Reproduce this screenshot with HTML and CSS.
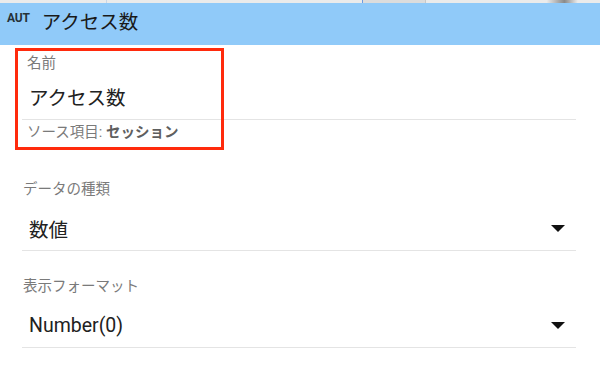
FILE: index.html
```html
<!DOCTYPE html>
<html lang="ja">
  <head>
    <meta charset="UTF-8" />
    <meta name="viewport" content="width=device-width, initial-scale=1.0" />
    <title>アクセス数</title>
    <link rel="stylesheet" href="styles.css">
  </head>
  <body>
    <div class="top-strip">
      <span class="strip-seg seg-a"></span>
      <span class="strip-seg seg-b"></span>
      <span class="strip-seg seg-c"></span>
      <span class="strip-seg seg-d"></span>
    </div>

    <header class="appbar">
      <span class="appbar-badge">AUT</span>
      <h1 class="appbar-title">アクセス数</h1>
    </header>

    <main class="form">
      <div class="field field-name">
        <div class="field-label">名前</div>
        <div class="field-row">
          <span class="field-value">アクセス数</span>
        </div>
        <div class="field-help">ソース項目: <strong>セッション</strong></div>
        <div class="highlight"></div>
      </div>

      <div class="field field-select field-first">
        <div class="field-label">データの種類</div>
        <div class="field-row">
          <span class="field-value">数値</span>
          <span class="caret"></span>
        </div>
      </div>

      <div class="field field-select">
        <div class="field-label">表示フォーマット</div>
        <div class="field-row">
          <span class="field-value">Number(0)</span>
          <span class="caret"></span>
        </div>
      </div>

      <div class="field field-select">
        <div class="field-label">集計方法</div>
      </div>
    </main>
  </body>
</html>
```

FILE: styles.css
```css
body {
  margin: 0;
  font-family: Roboto, "Noto Sans CJK JP", sans-serif;
  background-color: #ffffff;
  color: #212121;
  overflow: hidden;
}

/* Browser strip above the app bar */
.top-strip {
  display: flex;
  height: 3px;
  background-color: #ebebeb;
}

.strip-seg {
  display: block;
  height: 3px;
}

.seg-a {
  width: 120px;
  border-right: 1px solid #c9d6e6;
}

.seg-b {
  width: 287px;
  border-right: 1px solid #6d9be0;
}

.seg-c {
  width: 70px;
  background-color: #dcdcdc;
  border-right: 1px solid #c8c8c8;
}

.seg-d {
  width: 100px;
  margin-left: 85px;
  background: linear-gradient(to right, #ebebeb 40%, #8a8a8a 60%, #ebebeb 75%);
}

/* App bar */
.appbar {
  display: flex;
  align-items: flex-start;
  height: 42px;
  padding-left: 7px;
  background-color: #90caf9;
}

.appbar-badge {
  margin-top: 8px;
  font-size: 12px;
  font-weight: bold;
  letter-spacing: -0.2px;
  color: #263238;
}

.appbar-title {
  margin: 7px 0 0 12px;
  font-size: 19.5px;
  font-weight: normal;
  line-height: 26px;
  color: #1a1a1a;
}

/* Form fields */
.form {
  padding: 9px 24px 0 22px;
}

.field {
  position: relative;
}

.field-label {
  height: 20px;
  line-height: 20px;
  font-size: 14.5px;
  color: #7a7a7a;
  padding-left: 1px;
}

.field-name .field-label {
  padding-left: 5px;
}

.field-row {
  display: flex;
  align-items: center;
  justify-content: space-between;
  height: 44px;
  border-bottom: 1px solid #e4e4e4;
}

.field-name .field-row {
  height: 45px;
}

.field-value {
  padding-left: 7px;
  font-size: 19.5px;
  color: #212121;
}

.field-help {
  height: 19px;
  margin-top: 3px;
  line-height: 19px;
  font-size: 14.5px;
  color: #7a7a7a;
  padding-left: 5px;
}

.field-help strong {
  color: #5f5f5f;
}

.field-select {
  margin-top: 26px;
}

.field-first {
  margin-top: 38px;
}

.field-select .field-row {
  margin-top: 6px;
}

.caret {
  width: 0;
  height: 0;
  margin-right: 11px;
  border-left: 7px solid transparent;
  border-right: 7px solid transparent;
  border-top: 7px solid #111111;
}

/* Red annotation box over the name field */
.highlight {
  position: absolute;
  left: -7px;
  top: -6px;
  width: 203px;
  height: 96px;
  border: 3px solid #ff2a0c;
}
```
